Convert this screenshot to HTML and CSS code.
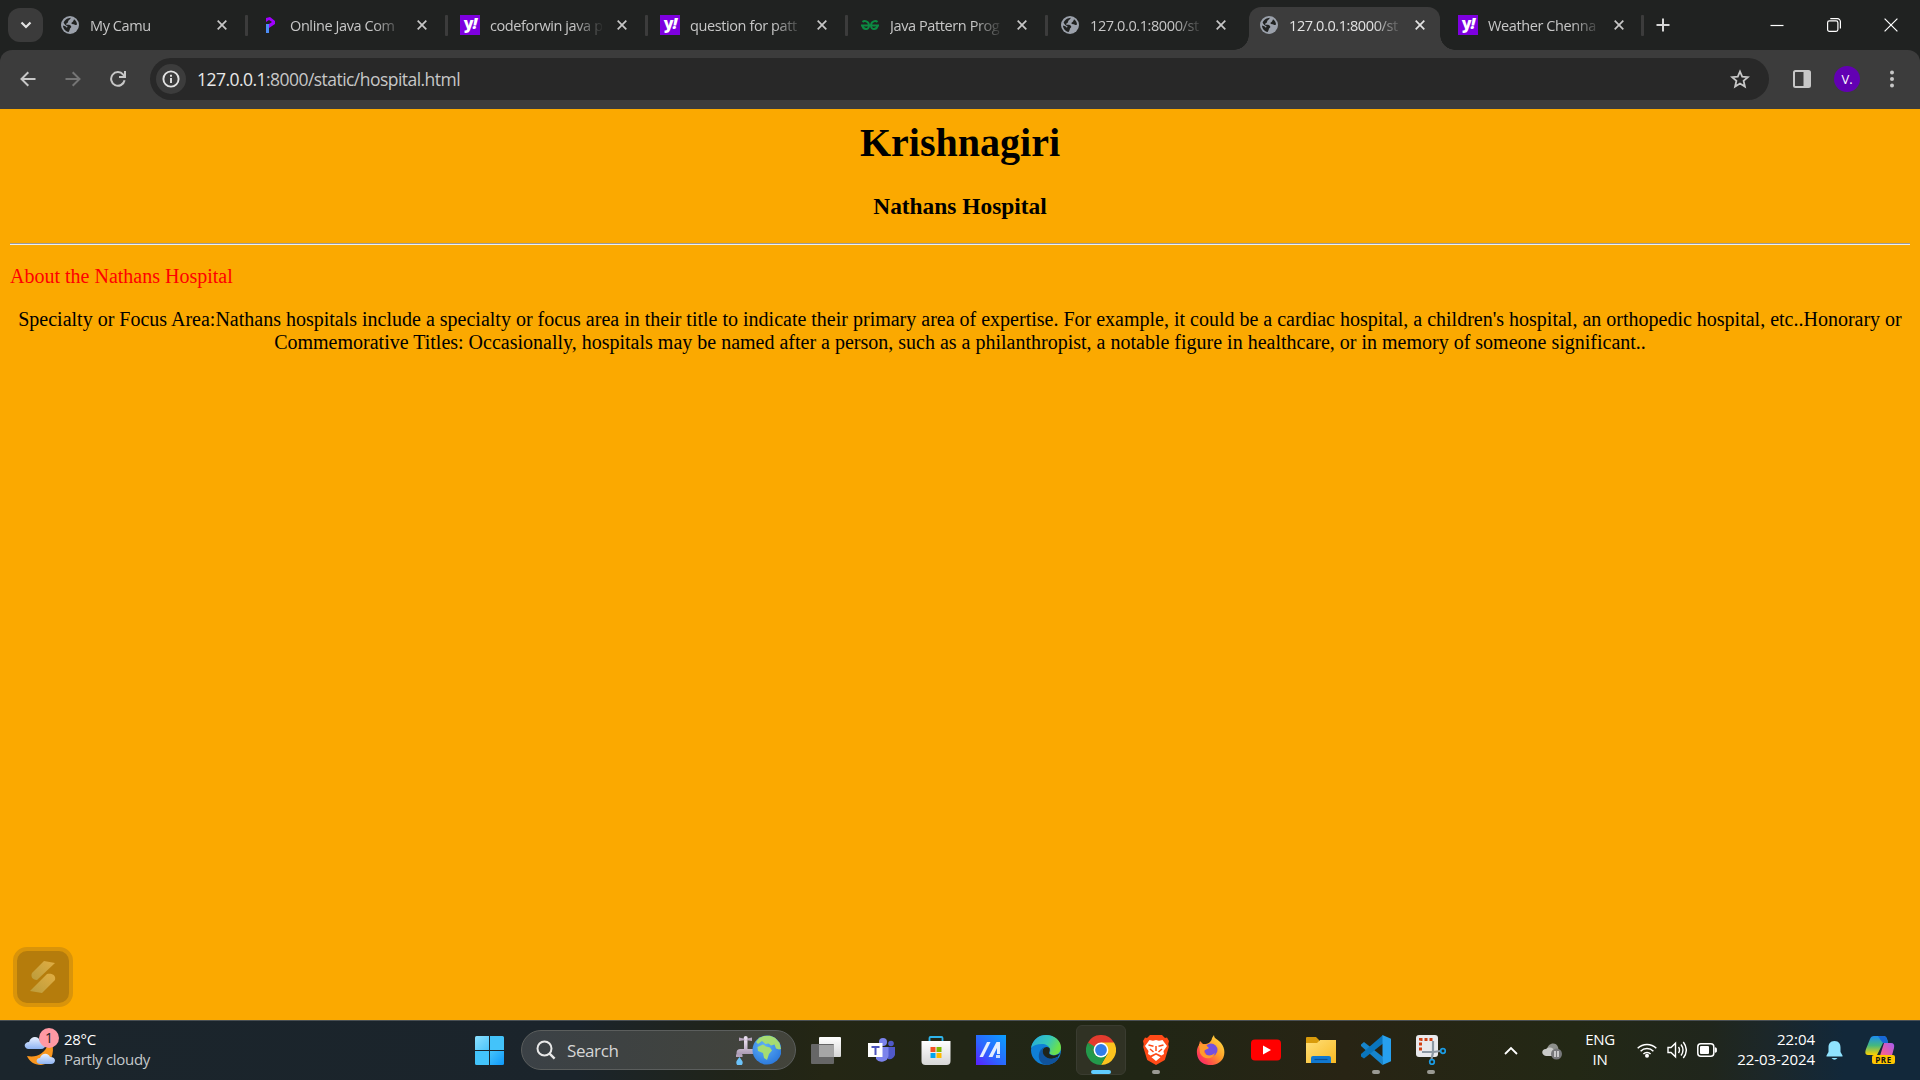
FILE: index.html
```html
<!DOCTYPE html>
<html lang="en">
<head>
<meta charset="utf-8">
<title>Krishnagiri</title>
<link rel="stylesheet" href="styles.css">
</head>
<body>
<svg class="defs" width="0" height="0" aria-hidden="true">
  <symbol id="globe" viewBox="0 0 18 18">
    <circle cx="9" cy="9" r="9" fill="#9ba1ab"/>
    <path class="land" d="M7.5 2.2 9.8 1.8C9.6 3 8.6 3.4 7.6 4.4 6.8 5.2 7.6 6 6.2 7 5.2 7.6 4.8 8 5.4 8.8 8 8.4 10 9 10.2 10.6 10.6 11.4 9.6 12 9 12.6 8.8 13.6 8.6 14.6 7.6 16 4.6 15.4 2 12.6 2 9.4 3 9.8 4 9.8 5 10.8 5.4 12 6.4 11.4 6.6 10.4 5.2 9.6 3.2 8.2 2.6 6.4 3.6 4.2 5.4 2.6 7.5 2.2ZM13 3.2C14.8 4.4 16 6.4 16 8.6 14.8 9.6 13.4 8 12 8.2 10.6 8.2 10 7 10.8 6.4 12 6 12.6 4.8 13 3.2Z"/>
  </symbol>
  <symbol id="x" viewBox="0 0 10 10"><path d="M.7.7l8.6 8.6M9.3.7.7 9.3" stroke="currentColor" stroke-width="1.7" fill="none"/></symbol>
</svg>

<header class="browser">
  <div class="strip">
    <div class="tabsearch"><svg width="12" height="8" viewBox="0 0 12 8"><path d="M1.5 1.5 6 6l4.500-4.500" fill="none" stroke="#e3e3e3" stroke-width="2.200"/></svg></div>
    <div class="tab"><svg class="fav"><use href="#globe"/></svg><span class="label">My Camu</span><svg class="close"><use href="#x"/></svg></div>
    <div class="tab"><svg class="fav" viewBox="0 0 18 18"><path d="M5 8h4v3H8v6H5z" fill="#4c8df6"/><path d="M5 2 9 1l5 4v3L8 12V8l3-2-3-2-3 2z" fill="#a100ff"/></svg><span class="label">Online Java Com</span><svg class="close"><use href="#x"/></svg></div>
    <div class="tab"><span class="yahoo">y<i>!</i></span><span class="label">codeforwin java p</span><svg class="close"><use href="#x"/></svg></div>
    <div class="tab"><span class="yahoo">y<i>!</i></span><span class="label">question for patt</span><svg class="close"><use href="#x"/></svg></div>
    <div class="tab"><svg class="fav" viewBox="0 0 18 18"><path d="M0 9.500h18M1.500 6C3 4.500 8 4.500 8 9.500s-6 4.500-6.600 0M16.500 6C15 4.500 10 4.500 10 9.500s6 4.500 6.600 0" fill="none" stroke="#0c8a42" stroke-width="1.900"/></svg><span class="label">Java Pattern Prog</span><svg class="close"><use href="#x"/></svg></div>
    <div class="tab beside"><svg class="fav"><use href="#globe"/></svg><span class="label">127.0.0.1:8000/st</span><svg class="close"><use href="#x"/></svg></div>
    <div class="tab active"><svg class="fav"><use href="#globe"/></svg><span class="label">127.0.0.1:8000/st</span><svg class="close"><use href="#x"/></svg></div>
    <div class="tab last"><span class="yahoo">y<i>!</i></span><span class="label">Weather Chenna</span><svg class="close"><use href="#x"/></svg></div>
    <svg class="plus" width="14" height="14" viewBox="0 0 14 14"><path d="M7 .5v13M.5 7h13" stroke="#d6d6d6" stroke-width="2"/></svg>
    <div class="winbtns">
      <svg width="14" height="14" viewBox="0 0 14 14"><path d="M.5 7.500h13" stroke="#fff" stroke-width="1.200"/></svg>
      <svg width="14" height="14" viewBox="0 0 14 14"><rect x=".6" y="2.900" width="10.300" height="10.400" rx="1.800" fill="none" stroke="#fff" stroke-width="1.200"/><path d="M3.300.7h7.200a2.900 2.900 0 0 1 2.900 2.900v6.800" fill="none" stroke="#fff" stroke-width="1.200"/></svg>
      <svg width="14" height="14" viewBox="0 0 14 14"><path d="m.6.6 12.800 12.800M13.400.6.6 13.400" stroke="#fff" stroke-width="1.200"/></svg>
    </div>
  </div>
  <div class="toolbar">
    <svg class="nav" width="16" height="16" viewBox="0 0 16 16"><path d="M15.500 8H2M8.300 1.200 1.500 8l6.800 6.800" fill="none" stroke="#c7c7c7" stroke-width="2"/></svg>
    <svg class="nav" width="16" height="16" viewBox="0 0 16 16"><path d="M.5 8H14M7.700 1.200 14.500 8l-6.800 6.800" fill="none" stroke="#757575" stroke-width="2"/></svg>
    <svg class="nav" width="16" height="16" viewBox="0 0 16 16"><path d="M14.600 9.300A6.800 6.800 0 1 1 13.200 3.600L14.500 5M15 0v6H9" fill="none" stroke="#c7c7c7" stroke-width="2"/></svg>
    <div class="omnibox">
      <span class="info"><svg width="18" height="18" viewBox="0 0 18 18"><circle cx="9" cy="9" r="7.600" fill="none" stroke="#e3e3e3" stroke-width="1.900"/><path d="M9 8v5M9 4.800v1.900" stroke="#e3e3e3" stroke-width="1.900"/></svg></span>
      <span class="url"><b>127.0.0.1</b>:8000/static/hospital.html</span>
      <svg class="star" width="20" height="20" viewBox="0 0 20 20"><path d="m10 2.500 2.200 5.200 5.700.5-4.300 3.700 1.300 5.600-4.900-3-4.900 3 1.300-5.600L2.100 8.200l5.700-.5z" fill="none" stroke="#c7c7c7" stroke-width="1.800"/></svg>
    </div>
    <svg class="panel" width="18" height="18" viewBox="0 0 18 18"><rect x="1" y="1" width="16" height="16" rx="1.500" fill="none" stroke="#c7c7c7" stroke-width="2"/><path d="M10.500 1H17v16h-6.500z" fill="#c7c7c7"/></svg>
    <span class="avatar">V.</span>
    <svg class="dots" width="4" height="18" viewBox="0 0 4 18"><g fill="#c7c7c7"><circle cx="2" cy="2.500" r="2"/><circle cx="2" cy="9" r="2"/><circle cx="2" cy="15.500" r="2"/></g></svg>
  </div>
</header>

<main class="page">
  <h1>Krishnagiri</h1>
  <h3>Nathans Hospital</h3>
  <hr>
  <p class="about">About the Nathans Hospital</p>
  <p class="desc">Specialty or Focus Area:Nathans hospitals include a specialty or focus area in their title to indicate their primary area of expertise. For example, it could be a cardiac hospital, a children's hospital, an orthopedic hospital, etc..Honorary or Commemorative Titles: Occasionally, hospitals may be named after a person, such as a philanthropist, a notable figure in healthcare, or in memory of someone significant..</p>
  <div class="recorder">
    <svg width="26" height="34" viewBox="0 0 26 34"><defs><linearGradient id="rg" x1="0" y1="1" x2="1" y2="0"><stop offset="0" stop-color="#bb9c3c"/><stop offset="1" stop-color="#e0ad43"/></linearGradient></defs><path d="M14 1 25 3 7 20C2 20 .5 16 2 13z" fill="url(#rg)"/><path d="M12 33 0 31 17 14c6-1 9 2 8 6z" fill="url(#rg)"/></svg>
  </div>
</main>

<footer class="taskbar">
  <div class="weather">
    <div class="wicon">
      <svg width="34" height="38" viewBox="0 0 34 38"><defs><linearGradient id="cl" x1="0" y1="0" x2="0" y2="1"><stop offset="0" stop-color="#e9f1ff"/><stop offset="1" stop-color="#8fb4f3"/></linearGradient></defs><path d="M3 26c9 2 18-2 21-12l4-2c3 12-1 22-11 23-7 0-12-4-14-9z" fill="#f9961e"/><path d="M4 19c-5-1-4-7 1-7 2-7 10-6 11-1 7 0 7 8 1 8z" fill="url(#cl)"/><path d="M16 34c-5-1-4-6 0-6 2-6 9-5 10-1 7 0 6 7 1 7z" fill="url(#cl)"/></svg>
      <span class="badge">1</span>
    </div>
    <div class="wtext"><div>28°C</div><div class="sub">Partly cloudy</div></div>
  </div>

  <div class="apps">
    <svg class="start" width="29" height="29" viewBox="0 0 29 29"><defs><linearGradient id="wn" x1="0" y1="0" x2="1" y2="1"><stop offset="0" stop-color="#8be0ff"/><stop offset="1" stop-color="#4cc4fa"/></linearGradient><linearGradient id="wn2" x1="0" y1="0" x2="1" y2="1"><stop offset="0" stop-color="#45c4fb"/><stop offset="1" stop-color="#0f98f9"/></linearGradient></defs><path d="M0 1.500Q0 0 1.500 0H14v14H0z" fill="url(#wn)"/><path d="M15 0h12.500Q29 0 29 1.500V14H15zM0 15h14v14H1.500Q0 29 0 27.500z" fill="#43c3fa"/><path d="M15 15h14v12.500q0 1.500-1.500 1.500H15z" fill="url(#wn2)"/></svg>
    <div class="search">
      <svg width="20" height="20" viewBox="0 0 20 20"><circle cx="8.500" cy="8.500" r="7" fill="none" stroke="#e8e8e8" stroke-width="2"/><path d="m13.600 13.600 5 5" stroke="#e8e8e8" stroke-width="2.400"/></svg>
      <span>Search</span>
      <svg class="earth" width="46" height="30" viewBox="0 0 46 30"><defs><linearGradient id="tap" x1="0" y1="0" x2="0" y2="1"><stop offset="0" stop-color="#eee4f2"/><stop offset="1" stop-color="#a391ad"/></linearGradient><radialGradient id="sea" cx=".4" cy=".35" r=".7"><stop offset="0" stop-color="#5eb0f8"/><stop offset="1" stop-color="#2b78dc"/></radialGradient></defs><path d="M1.500 20v-2q0-4 4-4H18v5H7v2zM9 14V4h3.500v10" fill="url(#tap)"/><path d="M1 19.500h6.500V22H1zM4 2.500q6 2 13 0v3.500q-6.500-1.500-13 0z" fill="#b5a4bd"/><circle cx="10.700" cy="3" r="2" fill="#e9def0"/><path d="M4.500 22C2.500 25 1.300 25.500 1.300 27.500a3.200 3.200 0 0 0 6.400 0c0-2-1.400-2.500-3.200-5.500z" fill="#6cc3fa"/><circle cx="32" cy="15" r="14.500" fill="url(#sea)"/><path d="m29 1 6-.2 5 2 4.500 5L46 14l-2 .5-3-1-1.500-4-3.500 1-2.500-2-3 .5L27 6l-4 3-2-2 3-4zM22.500 12l5.500-2.500 3 2 4 1 2 3-3 3.500-2 6-3-2-1-5-5-2z" fill="#a5dc72"/></svg>
    </div>
    <div class="app"><svg viewBox="0 0 30 30"><defs><linearGradient id="tv" x1="0" y1="0" x2="0" y2="1"><stop offset="0" stop-color="#fff"/><stop offset="1" stop-color="#d6d6d6"/></linearGradient></defs><rect x="8" y="2" width="22" height="20" rx="1" fill="url(#tv)"/><rect y="9" width="23" height="20" rx="1" fill="#666"/><path d="M8 10h15v12H8z" fill="#a6a6a6"/></svg></div>
    <div class="app"><svg viewBox="0 0 30 30"><circle cx="25" cy="8.500" r="2.800" fill="#5059c9"/><circle cx="17" cy="7" r="4" fill="#7b83eb"/><path d="M20 12h9v8q-2 5-7 4z" fill="#5059c9"/><path d="M10 12h12.500v9a7 7 0 0 1-12.500 3z" fill="#7b83eb"/><rect x="2" y="8" width="14.500" height="14" fill="#fff"/><path d="M5.500 11h8v2h-3v7h-2v-7h-3z" fill="#4b53bc"/></svg></div>
    <div class="app"><svg viewBox="0 0 30 30"><path d="M8.500 7V3q0-1 1-1h11q1 0 1 1v4" fill="none" stroke="#2eb4ea" stroke-width="1.800"/><path d="M.5 6h29v20q0 4-4 4h-21q-4 0-4-4z" fill="url(#tv)"/><path d="M9.500 12H14.500v5h-5z" fill="#f25022"/><path d="M15.500 12h5v5h-5z" fill="#7fba00"/><path d="M9.500 18h5v5h-5z" fill="#00a4ef"/><path d="M15.500 18h5v5h-5z" fill="#ffb900"/></svg></div>
    <div class="app"><svg viewBox="0 0 30 30"><defs><linearGradient id="as" x1="0" y1="1" x2="1" y2="0"><stop offset="0" stop-color="#5b1dff"/><stop offset=".4" stop-color="#2e61ff"/><stop offset="1" stop-color="#0aa0ff"/></linearGradient></defs><path d="M0 0h30v30H0z" fill="url(#as)"/><path d="m11 7h3.500L7 22H3.500zM20.500 7H24v12h-3v-6l-4.500 9H12.500z" fill="#e4edff"/><path d="M20 20h4v3h-4z" fill="#cbdcff"/></svg></div>
    <div class="app"><svg viewBox="0 0 30 30"><defs><linearGradient id="ed" x1="0" y1="0" x2="1" y2=".4"><stop offset="0" stop-color="#24a9df"/><stop offset=".6" stop-color="#36c7b9"/><stop offset="1" stop-color="#6be14a"/></linearGradient></defs><circle cx="15" cy="15" r="15" fill="#0f7fd6"/><path d="M10 14C8 22 14 28 22 26l5-2c-3 4-8 6-12 6C9 29 5 22 10 14z" fill="#10539c"/><path d="M0 13C2 4 8 0 15 0c9 0 15 6 15 12.500 0 7-7 9-11 6.500-1-1 1-2 0-5-1-3-4-5-8-5-5 0-9 1.500-11 4z" fill="url(#ed)"/><path d="M18.500 13c-4-3-8 1-7 5 1 5 7 8 15 4l3-4c-4 3-9 3-11 1-1-2 1-3 0-6z" fill="#20241a"/><path d="M13 12c-4 5 1 12 8 12l6-2v2c-4 5-12 4-15 1-4-4-4-10 1-13z" fill="#10539c"/></svg></div>
    <div class="app current"><svg viewBox="0 0 30 30"><path d="M2 7.500A15 15 0 0 1 28 7.500L15 15z" fill="#e33b2e"/><path d="M28 7.500A15 15 0 0 1 15 30l6.500-11.250L15 7.500z" fill="#fcc31e"/><path d="M2 7.500A15 15 0 0 0 15 30l6.500-11.250L15 20l-6.500-1.250z" fill="#23994b"/><path d="M2 7.500 8.500 18.750 15 7.500z" fill="#e33b2e"/><path d="M2 7.500 8.500 18.750 11 13z" fill="#23994b"/><circle cx="15" cy="15" r="7.400" fill="#fff"/><circle cx="15" cy="15" r="5.900" fill="#317de9"/></svg></div>
    <div class="app running"><svg viewBox="0 0 30 30"><path d="M9 0h12l3 3 2-.5L28 6l-.7 3 .5 3-4 13-8.800 5L6.200 25 2.200 12l.5-3L2 6l2-3.500L6 3z" fill="#ff4a17"/><path d="m8.500 5 3.500.7 3-.7 3 .7 3.500-.7 4.500 6-3.500 5 .5 3-2.500 1.500L15 18l-5.500 2.500L7 19l.5-3L4 11zM10.500 22.300l4.500-2.500 4.500 2.500L15 26z" fill="#fff"/><path d="m7.500 10 5 1.200M22.500 10l-5 1.200M15 11v5M9 14l3.500 3M21 14l-3.500 3" stroke="#ff4a17" stroke-width="1.500" fill="none"/></svg></div>
    <div class="app"><svg viewBox="0 0 30 30"><defs><linearGradient id="ff" x1="1" y1="0" x2="0" y2="1"><stop offset="0" stop-color="#fff04a"/><stop offset=".45" stop-color="#ff9a28"/><stop offset=".8" stop-color="#ff3b54"/><stop offset="1" stop-color="#ec2294"/></linearGradient></defs><path d="M18 0c0 4 4 4 7 8 5 6 4 14 0 18-6 6-16 5-21 0C0 21 0 14 3 10L4 6l3 3h3C12 9 16 6 16 3z" fill="url(#ff)"/><circle cx="15" cy="15" r="6.500" fill="#7450df"/><path d="M3 9c2 0 4 0 7 1l3 3c-2 2-5 1-5 4 2 5 8 4 11 1-2 7-12 7-15 0z" fill="#ff9b2c"/></svg></div>
    <div class="app"><svg viewBox="0 0 30 30"><rect y="4.500" width="30" height="21" rx="4" fill="#f00"/><path d="m12 10.500 8 4.500-8 4.500z" fill="#fff"/></svg></div>
    <div class="app"><svg viewBox="0 0 30 30"><defs><linearGradient id="fo" x1="0" y1="0" x2="1" y2="1"><stop offset="0" stop-color="#ffdf78"/><stop offset="1" stop-color="#f8b923"/></linearGradient></defs><path d="M0 3q0-1 1-1h9l3 3v4H0z" fill="#d99b0b"/><path d="M0 8h11l3-3h16v23H0z" fill="url(#fo)"/><path d="M5 28v-5q0-2 2-2h16q2 0 2 2v5z" fill="#1178d0"/><path d="M8.500 24.500h13" stroke="#0b4f94" stroke-width="1.200"/></svg></div>
    <div class="app running"><svg viewBox="0 0 30 30"><path d="M3 7 0 9.500v1.500L21.500 30l.5-8z" fill="#1684cc"/><path d="M22 0 0 19v2.500L3 23.500 22 8.500z" fill="#0a75bd"/><path d="M21.500 0 30 3.800v22.400L21.500 30z" fill="#27a0ee"/></svg></div>
    <div class="app running"><svg viewBox="0 0 30 30"><rect width="22" height="22" rx="3" fill="#e9e9ec"/><path d="M4.500 15.500v-11h12" fill="none" stroke="#d03f12" stroke-width="3" stroke-dasharray="3 2"/><path d="M17 6v11.500L15.500 24M6 17h11.500l7-1" fill="none" stroke="#8d98a3" stroke-width="2.200"/><circle cx="16" cy="27" r="2.300" fill="none" stroke="#1b9ce5" stroke-width="1.700"/><circle cx="27" cy="16" r="2.300" fill="none" stroke="#1b9ce5" stroke-width="1.700"/></svg></div>
  </div>

  <div class="tray">
    <svg class="chev" width="14" height="9" viewBox="0 0 14 9"><path d="m1 8 6-6 6 6" fill="none" stroke="#fff" stroke-width="1.800"/></svg>
    <svg class="cloud" width="20" height="18" viewBox="0 0 20 18"><path d="M5 8C5 1 14-1 16 5l1 5H6z" fill="#8d8f8b"/><path d="M4 14c-5-1-5-7 0-7 4-3 8-1 9 3v4z" fill="#c9cac8"/><circle cx="14.500" cy="12" r="5.500" fill="#77787a"/><path d="M13 9v6M16 9v6" stroke="#fff" stroke-width="1.200"/></svg>
    <div class="lang"><div>ENG</div><div>IN</div></div>
    <svg class="wifi" width="20" height="16" viewBox="0 0 20 16"><g fill="none" stroke="#fff" stroke-width="1.500"><path d="M.7 6.300a13 13 0 0 1 18.600 0"/><path d="M3.600 9.200a9 9 0 0 1 12.800 0"/><path d="M6.400 12a5 5 0 0 1 7.200 0"/></g><circle cx="10" cy="13.700" r="2" fill="#fff"/></svg>
    <svg class="vol" width="20" height="18" viewBox="0 0 20 18"><path d="M1 6.500h3l4.500-4.300v13.600L4 11.500H1zM11.500 6q2 3 0 6M14 3.500q4 5.500 0 11M16.300 1q6 8 0 16" fill="none" stroke="#fff" stroke-width="1.400"/></svg>
    <svg class="bat" width="20" height="14" viewBox="0 0 20 14"><rect x=".8" y=".8" width="16" height="12.400" rx="3" fill="none" stroke="#fff" stroke-width="1.500"/><rect x="3" y="3" width="9" height="8" rx="1" fill="#fff"/><path d="M18 4.500q2 0 2 2.500t-2 2.500z" fill="#fff" stroke="#fff" stroke-width=".5"/></svg>
    <div class="clock"><div>22:04</div><div>22-03-2024</div></div>
    <svg class="bell" width="17" height="19" viewBox="0 0 17 19"><path d="M8.500 0C4 0 2.500 3 2.500 6.500V11L.5 14.500V15.500h16v-1L14.500 11V6.500C14.500 3 13 0 8.500 0zM5.500 17q3 3.500 6 0z" fill="#8fe3ff"/></svg>
    <div class="copilot">
      <svg width="30" height="28" viewBox="0 0 30 28"><defs><linearGradient id="c1" x1="0" y1="0" x2="0" y2="1"><stop offset="0" stop-color="#1c8df0"/><stop offset=".5" stop-color="#45b87e"/><stop offset="1" stop-color="#ffd200"/></linearGradient><linearGradient id="c2" x1="1" y1="0" x2="0" y2="1"><stop offset="0" stop-color="#a45cf0"/><stop offset=".6" stop-color="#ec5ca4"/><stop offset="1" stop-color="#ff7b63"/></linearGradient></defs><path d="M9 0h10q3 0 4 7h-5L12 19H3q-4 0-2-6L5 3q1-3 4-3z" fill="url(#c1)"/><path d="M13 0h6q3 0 4 7h-5q-2-2-5-7z" fill="#1768d7"/><path d="M19 7h7q4 0 3 5l-3 11H14z" fill="url(#c2)"/></svg>
      <span class="pre">PRE</span>
    </div>
  </div>
</footer>
</body>
</html>
```
FILE: styles.css
```css
* { box-sizing: border-box; }
html, body { height: 100%; }
body {
  margin: 0;
  width: 1920px;
  height: 1080px;
  display: flex;
  flex-direction: column;
  overflow: hidden;
  font-family: "Open Sans", "Noto Sans", sans-serif;
}
svg { display: block; flex: none; }
.defs { position: absolute; }

/* Browser chrome */
.browser { height: 109px; background: #202221; flex: none; }
.strip { height: 50px; display: flex; align-items: center; padding-left: 8px; }
.tabsearch {
  width: 35px; height: 34px; border-radius: 12px; background: #3b3b3b;
  display: flex; align-items: center; justify-content: center; margin-right: 4px;
}
.tab {
  width: 200px; height: 50px; padding: 0 0 0 14px; flex: none;
  display: flex; align-items: center; position: relative; color: #c7c7c7;
}
.tab::after {
  content: ""; position: absolute; right: -1px; top: 15px;
  width: 3px; height: 21px; border-radius: 1px; background: #3c3c3c;
}
.tab.beside::after, .tab.active::after { display: none; }
.fav { width: 18px; height: 18px; margin-right: 11px; }
.land { fill: #202221; }
.label {
  width: 112px; white-space: nowrap;
  font-size: 14.5px; letter-spacing: -0.4px; line-height: 22px; margin-top: 1px;
  -webkit-mask-image: linear-gradient(90deg, #000 84px, transparent 114px);
  mask-image: linear-gradient(90deg, #000 84px, transparent 114px);
}
.close { width: 10px; height: 10px; margin-left: 15px; }
.beside .close, .active .close, .last .close { margin-left: 14px; }
.yahoo {
  width: 20px; height: 20px; background: #7e00e0; color: #fff; flex: none;
  margin: 0 10px 0 -1px; font-weight: 800; font-size: 16px; line-height: 17px;
  text-align: center; letter-spacing: -1px;
}
.active {
  height: 43px; width: 191px; margin: 0 5px 0 2px; padding: 0 0 7px 11px;
  align-self: flex-end; border-radius: 12px 12px 0 0; background: #3c3c3c; color: #e3e3e3;
}
.active::before {
  content: ""; position: absolute; left: -15px; right: -15px; bottom: 0; height: 15px;
  background:
    radial-gradient(circle at 0 0, transparent 14.500px, #3c3c3c 15px) left / 15px 15px no-repeat,
    radial-gradient(circle at 100% 0, transparent 14.500px, #3c3c3c 15px) right / 15px 15px no-repeat;
}
.last { width: 198px; }
.plus { margin-left: 13px; }
.winbtns { display: flex; gap: 43px; margin-left: auto; padding-right: 22px; }
.toolbar {
  height: 59px; background: #3c3c3c; border-radius: 12px 12px 0 0;
  display: flex; align-items: center; padding: 0 26px 1px 20px;
}
.nav { margin-right: 29px; }
.omnibox {
  width: 1619px; height: 42px; margin-left: -5px; border-radius: 21px; background: #282828;
  display: flex; align-items: center; padding: 0 19px 0 6px;
}
.info {
  width: 30px; height: 30px; border-radius: 50%; background: #3c3c3c;
  display: flex; align-items: center; justify-content: center; margin-right: 11px;
}
.url { font-size: 17.5px; letter-spacing: -0.54px; color: #c7c7c7; }
.url b { font-weight: 400; color: #e8e8e8; }
.star { margin-left: auto; }
.panel { margin-left: 24px; }
.avatar {
  width: 26px; height: 26px; border-radius: 50%; background: #6200b3; color: #fff; margin-left: 23px;
  font-size: 13px; line-height: 26px; text-align: center;
}
.dots { margin-left: auto; }

/* Web page, shown at 125% zoom */
.page {
  flex: 1; background: #fba900; padding: 11px 10px 10px; position: relative;
  font: 20px/23px "Liberation Serif", "Times New Roman", serif; color: #000;
}
h1 { font-size: 40px; line-height: 46px; margin: 0; text-align: center; }
h3 { font-size: 23.400px; line-height: 27px; margin: 27px 0 23px; text-align: center; }
hr { margin: 0; height: 2px; border: 0; background: linear-gradient(#9a9a9a 50%, #eee 50%); }
p { margin: 20px 0; }
.about { color: #f00; }
.desc { text-align: center; }
.recorder {
  position: absolute; left: 13px; bottom: 13px; width: 60px; height: 60px;
  border: 4px solid #d9940a; border-radius: 14px; background: #b57c0c;
  display: flex; align-items: center; justify-content: center;
}

/* Taskbar */
.taskbar {
  height: 60px; flex: none; border-top: 1px solid #4a5054; color: #fff; padding-bottom: 1px;
  background: linear-gradient(90deg, #1b252c 0, #1b242b 30%, #202419 38%, #242614 43%, #222616 50%, #212615 60%, #282414 70%, #232815 82%, #20261c 89%, #1c2729 92%, #12283a 96%, #12283a 100%);
  display: flex; align-items: center;
}
.weather { width: 475px; padding: 0 0 2px 24px; display: flex; align-items: center; font-size: 15px; line-height: 20px; }
.wicon { position: relative; width: 34px; height: 38px; margin-right: 6px; }
.badge {
  position: absolute; left: 15px; top: -2px; width: 20px; height: 20px; border-radius: 50%;
  background: #ff99a4; color: #222; text-align: center; font-size: 14px; line-height: 20px;
}
.wtext { letter-spacing: -0.3px; }
.sub { color: #c4c8ca; }
.apps { display: flex; align-items: center; }
.search {
  width: 275px; height: 40px; margin: 0 5px 0 17px; padding: 0 14px 0 14px; border-radius: 20px;
  border: 1px solid #5b5e5d; background: linear-gradient(90deg, #3b4146, #43443b);
  display: flex; align-items: center; font-size: 17px; letter-spacing: -0.4px; color: #d6d6d6;
}
.search span { margin-left: 11px; }
.earth { margin-left: auto; }
.app {
  width: 50px; height: 50px; margin-right: 5px; border-radius: 6px; position: relative;
  display: flex; align-items: center; justify-content: center;
}
.app svg { width: 30px; height: 30px; }
.current { background: #303224; border: 1px solid #3a3c30; }
.current::after, .running::after {
  content: ""; position: absolute; bottom: 1px; left: 21px; width: 8px; height: 4px;
  border-radius: 2px; background: #9a9a93;
}
.current::after { left: 14px; bottom: 0; width: 20px; background: #60cdff; }
.tray { display: flex; align-items: center; margin-left: auto; padding-right: 25px; font-size: 15px; line-height: 20px; }
.cloud { margin: 2px 0 0 24px; }
.lang { width: 40px; text-align: center; margin: 0 17px 2px 18px; letter-spacing: -0.3px; }
.vol, .bat { margin-left: 10px; }
.clock { width: 85px; text-align: right; margin: 0 0 3px 13px; letter-spacing: -0.05px; }
.bell { margin-left: 11px; }
.copilot { position: relative; margin-left: 22px; width: 30px; height: 28px; }
.pre {
  position: absolute; left: 7px; top: 19px; width: 23px; height: 9px; border-radius: 2px;
  background: #ffc600; color: #111; font-size: 8px; line-height: 9px; font-weight: 700;
  text-align: center; letter-spacing: 0.5px;
}
```
